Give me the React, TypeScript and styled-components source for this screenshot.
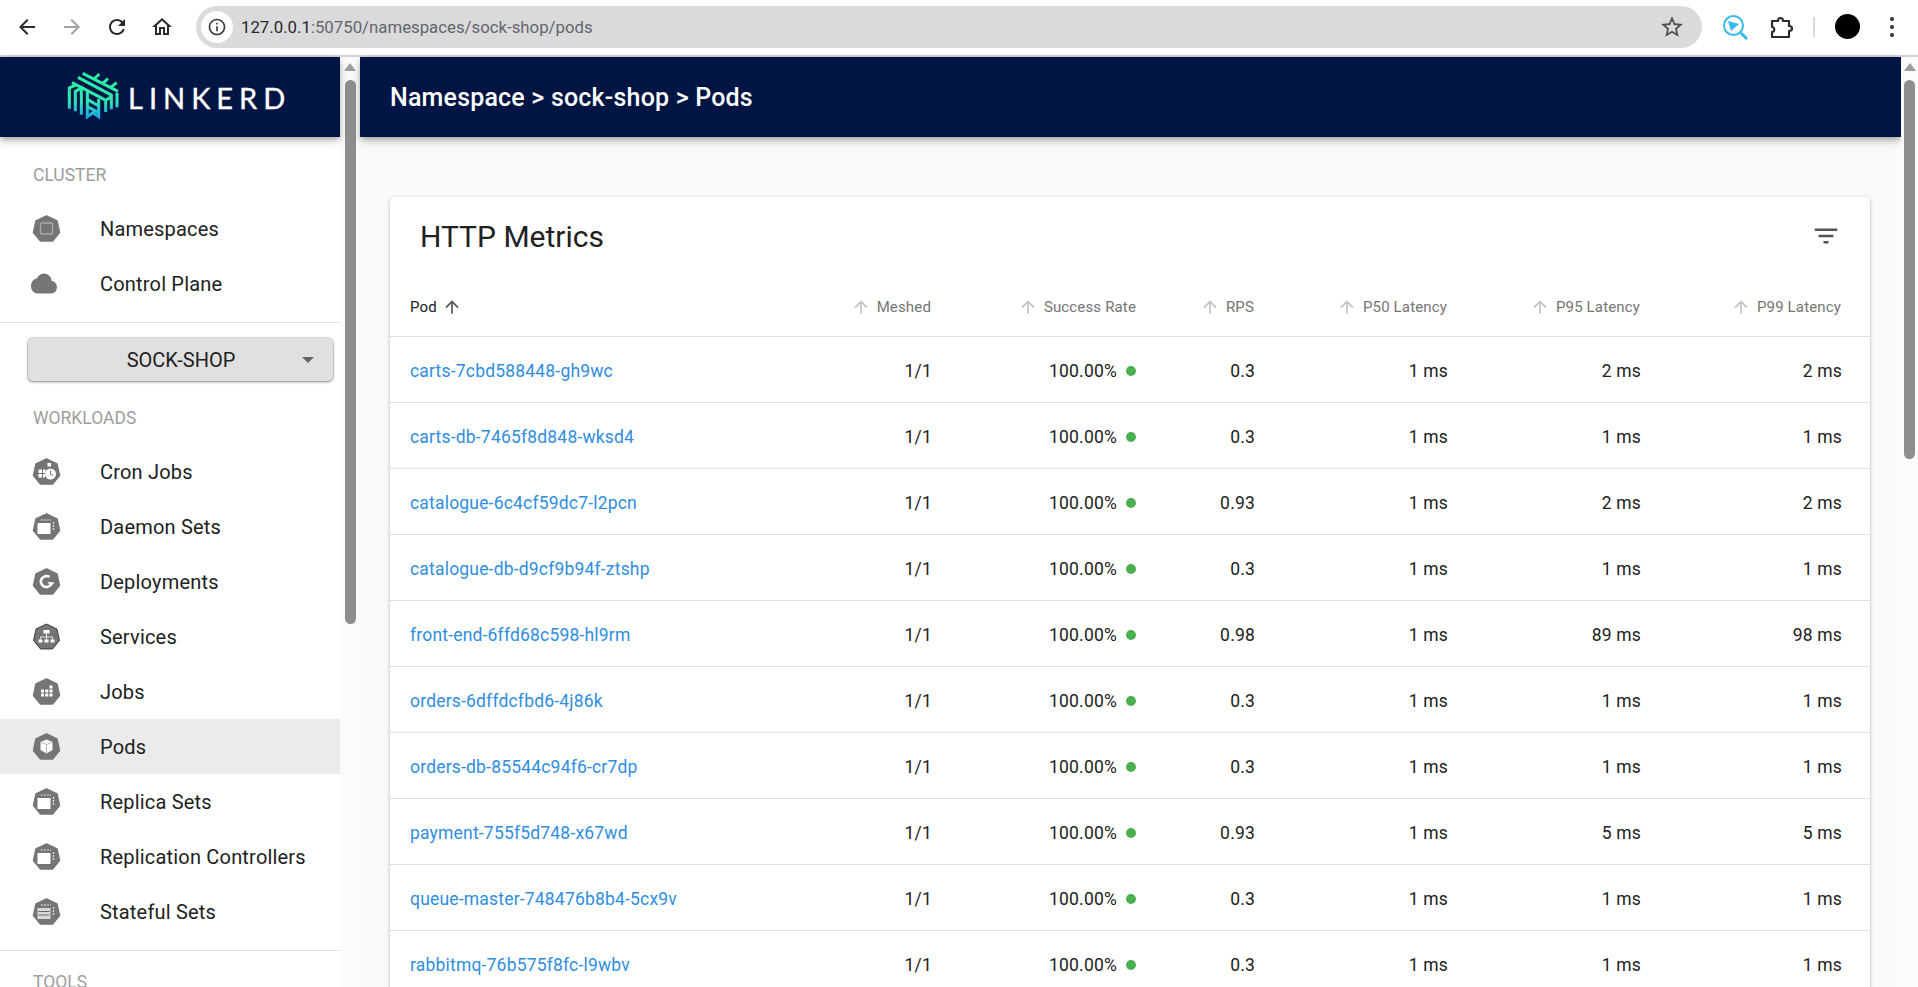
import React from "react";
import styled, { createGlobalStyle } from "styled-components";

// Types for the table rows
type PodRow = {
  pod: string;
  rps: string;
  p50: string;
  p95: string;
  p99: string;
};

type NavEntry = {
  label: string;
  icon: React.ReactNode;
  active?: boolean;
};

const pods: PodRow[] = [
  { pod: "carts-7cbd588448-gh9wc", rps: "0.3", p50: "1 ms", p95: "2 ms", p99: "2 ms" },
  { pod: "carts-db-7465f8d848-wksd4", rps: "0.3", p50: "1 ms", p95: "1 ms", p99: "1 ms" },
  { pod: "catalogue-6c4cf59dc7-l2pcn", rps: "0.93", p50: "1 ms", p95: "2 ms", p99: "2 ms" },
  { pod: "catalogue-db-d9cf9b94f-ztshp", rps: "0.3", p50: "1 ms", p95: "1 ms", p99: "1 ms" },
  { pod: "front-end-6ffd68c598-hl9rm", rps: "0.98", p50: "1 ms", p95: "89 ms", p99: "98 ms" },
  { pod: "orders-6dffdcfbd6-4j86k", rps: "0.3", p50: "1 ms", p95: "1 ms", p99: "1 ms" },
  { pod: "orders-db-85544c94f6-cr7dp", rps: "0.3", p50: "1 ms", p95: "1 ms", p99: "1 ms" },
  { pod: "payment-755f5d748-x67wd", rps: "0.93", p50: "1 ms", p95: "5 ms", p99: "5 ms" },
  { pod: "queue-master-748476b8b4-5cx9v", rps: "0.3", p50: "1 ms", p95: "1 ms", p99: "1 ms" },
  { pod: "rabbitmq-76b575f8fc-l9wbv", rps: "0.3", p50: "1 ms", p95: "1 ms", p99: "1 ms" },
];

const GlobalStyle = createGlobalStyle`
  html, body {
    margin: 0;
    height: 100%;
    overflow: hidden;
    background: #fafafa;
    font-family: Roboto, "Liberation Sans", sans-serif;
  }
  * { box-sizing: border-box; }
`;

const Page = styled.div`
  width: 1918px;
  height: 987px;
  display: flex;
  flex-direction: column;
  overflow: hidden;
`;

// BROWSER CHROME
const Chrome = styled.header`
  height: 57px;
  flex: none;
  display: flex;
  align-items: center;
  padding: 0 0 2px 15px;
  background: #fff;
  border-bottom: 2px solid #d2d2d2;
`;
const ChromeButton = styled.span<{ $muted?: boolean; $gap?: number }>`
  width: 24px;
  height: 24px;
  flex: none;
  margin-right: ${({ $gap }) => $gap ?? 21}px;
  color: ${({ $muted }) => ($muted ? "#a3a3a3" : "#2b2b2b")};
  svg { display: block; width: 100%; height: 100%; fill: currentColor; }
`;
const AddressBar = styled.div`
  width: 1506px;
  height: 42px;
  margin-left: 22px;
  flex: none;
  display: flex;
  align-items: center;
  padding: 0 17px 0 5px;
  border-radius: 21px;
  background: #dadadc;
`;
const InfoBadge = styled.span`
  width: 32px;
  height: 32px;
  flex: none;
  display: flex;
  align-items: center;
  justify-content: center;
  border-radius: 50%;
  background: #fff;
  color: #3c3c3c;
  svg { width: 20px; height: 20px; fill: currentColor; }
`;
const Url = styled.div`
  flex: 1;
  margin-left: 8px;
  font-size: 16.8px;
  color: #63666a;
  strong { font-weight: 400; color: #26282b; }
`;
const StarIcon = styled.span`
  width: 26px;
  height: 26px;
  color: #4c4c4c;
  svg { display: block; width: 100%; height: 100%; fill: currentColor; }
`;
const ToolIcon = styled.span<{ $left: number }>`
  width: 28px;
  height: 28px;
  flex: none;
  margin-left: ${({ $left }) => $left}px;
  svg { display: block; width: 100%; height: 100%; }
`;
const ChromeDivider = styled.span`
  width: 2px;
  height: 20px;
  flex: none;
  margin-left: 18px;
  background: #dcdad6;
`;
const Avatar = styled.span`
  width: 25px;
  height: 25px;
  flex: none;
  margin-left: 20px;
  border-radius: 50%;
  background: #000;
`;
const MenuDots = styled.span`
  width: 4px;
  flex: none;
  margin-left: 30px;
  display: flex;
  flex-direction: column;
  gap: 4px;
  i { display: block; width: 4px; height: 4px; border-radius: 50%; background: #333; }
`;

// APP SHELL
const Body = styled.div`
  flex: 1;
  min-height: 0;
  display: flex;
`;
const Sidebar = styled.aside`
  width: 340px;
  flex: none;
  display: flex;
  flex-direction: column;
  background: #fff;
`;
const BrandBar = styled.div`
  height: 80px;
  flex: none;
  display: flex;
  align-items: center;
  padding-left: 67px;
  background: #001544;
  box-shadow: 0 3px 6px -1px rgba(0, 0, 0, 0.3), 0 5px 10px rgba(0, 0, 0, 0.12);
  position: relative;
`;
const LogoMark = styled.svg`
  width: 52px;
  height: 52px;
  flex: none;
`;
const LogoText = styled.span`
  margin-left: 9px;
  font-family: Lato, "Open Sans", sans-serif;
  font-size: 29px;
  font-weight: 400;
  letter-spacing: 6px;
  color: #fff;
  -webkit-text-stroke: 0.35px #fff;
`;
const SectionLabel = styled.div<{ $top: number; $bottom: number }>`
  margin: ${({ $top }) => $top}px 0 ${({ $bottom }) => $bottom}px 33px;
  height: 20px;
  font-size: 17.5px;
  line-height: 20px;
  color: #9e9e9e;
`;
const NavItem = styled.div<{ $active?: boolean }>`
  height: 55px;
  flex: none;
  display: flex;
  align-items: center;
  padding-left: 33px;
  font-size: 20px;
  letter-spacing: 0.19px;
  color: #212121;
  background: ${({ $active }) => ($active ? "#ebebeb" : "transparent")};
`;
const NavIconSlot = styled.span`
  width: 27px;
  height: 27px;
  flex: none;
  margin-right: 40px;
  svg { display: block; width: 100%; height: 100%; overflow: visible; }
`;
const Rule = styled.div<{ $top: number }>`
  height: 1px;
  flex: none;
  margin-top: ${({ $top }) => $top}px;
  background: #e0e0e0;
`;
const NamespaceSelect = styled.div`
  height: 43px;
  flex: none;
  margin: 15px 7px 0 28px;
  padding: 0 19px 0 0;
  display: flex;
  align-items: center;
  border-radius: 5px;
  background: #e0e0e0;
  font-size: 20px;
  color: #212121;
  box-shadow: 0 0 0 1px rgba(0, 0, 0, 0.1), 0 1px 3px rgba(0, 0, 0, 0.4);
  span { flex: 1; text-align: center; padding-left: 32px; }
  i {
    width: 0;
    height: 0;
    border-left: 6.5px solid transparent;
    border-right: 6.5px solid transparent;
    border-top: 6.5px solid #666;
  }
`;

// SCROLLBARS
const ScrollTrack = styled.div<{ $width: number; $thumbEnd: number; $bg: string }>`
  width: ${({ $width }) => $width}px;
  flex: none;
  background: ${({ $bg }) => $bg};
  display: flex;
  flex-direction: column;
  align-items: center;
  padding-top: 6px;
  &::before {
    content: "";
    width: 0;
    height: 0;
    border-left: 6.5px solid transparent;
    border-right: 6.5px solid transparent;
    border-bottom: 8px solid #9c9c9c;
  }
  &::after {
    content: "";
    display: block;
    width: 11px;
    height: ${({ $thumbEnd }) => $thumbEnd}px;
    margin-top: 9px;
    border-radius: 6px;
    background: #8e8e8e;
  }
`;

// MAIN CONTENT
const Main = styled.main`
  flex: 1;
  min-width: 0;
  display: flex;
  flex-direction: column;
  background: #fafafa;
`;
const TopBar = styled.div`
  height: 80px;
  flex: none;
  display: flex;
  align-items: center;
  padding-left: 30px;
  background: #001544;
  color: #fff;
  font-size: 25px;
  font-weight: 500;
  letter-spacing: 0.19px;
  box-shadow: 0 3px 6px -1px rgba(0, 0, 0, 0.3), 0 5px 10px rgba(0, 0, 0, 0.12);
`;
const Card = styled.section`
  margin: 60px 31px 0 30px;
  border-radius: 5px;
  background: #fff;
  box-shadow: 0 1px 4px rgba(0, 0, 0, 0.22), 0 1px 2px rgba(0, 0, 0, 0.12);
`;
const CardHead = styled.div`
  height: 80px;
  display: flex;
  align-items: center;
  justify-content: space-between;
  padding: 0 29px 2px 30px;
  h2 {
    margin: 0;
    font-size: 30px;
    font-weight: 400;
    color: #212121;
  }
  svg { width: 30px; height: 30px; fill: #555; display: block; }
`;
const Row = styled.div<{ $head?: boolean }>`
  height: ${({ $head }) => ($head ? 60 : 66)}px;
  display: grid;
  grid-template-columns: 400px 121px 205px 118px 193px 193px 201px;
  align-items: center;
  padding: ${({ $head }) => ($head ? 0 : 2)}px 0 0 20px;
  border-bottom: 1px solid #e0e0e0;
  font-size: ${({ $head }) => ($head ? 15 : 17.5)}px;
  letter-spacing: ${({ $head }) => ($head ? 0.15 : 0.19)}px;
  color: #212121;
`;
const HeadLabel = styled.div<{ $active?: boolean }>`
  display: flex;
  align-items: center;
  justify-content: ${({ $active }) => ($active ? "flex-start" : "flex-end")};
  gap: ${({ $active }) => ($active ? 5 : 6)}px;
  color: ${({ $active }) => ($active ? "#212121" : "#757575")};
  svg {
    width: 20px;
    height: 20px;
    flex: none;
    fill: ${({ $active }) => ($active ? "#555" : "#c4c4c4")};
  }
`;
const Num = styled.div`
  text-align: right;
  margin-right: -1px;
`;
const PodLink = styled.a`
  color: #2f8ee0;
  text-decoration: none;
`;
const RateCell = styled.div`
  display: flex;
  align-items: center;
  justify-content: flex-end;
  gap: 9px;
  i {
    width: 10px;
    height: 10px;
    border-radius: 50%;
    background: #4caf50;
  }
`;

// ICONS
const HEPTAGON = "13.5,1 24,6 26.5,17.5 19.5,26 7.5,26 .5,17.5 3,6";

const Hept = ({ children, outline }: { children?: React.ReactNode; outline?: boolean }) => (
  <svg viewBox="0 0 27 27">
    <polygon
      points={HEPTAGON}
      fill="#757575"
      stroke={outline ? "#222" : "#757575"}
      strokeWidth={outline ? 0.8 : 1.5}
      strokeLinejoin="round"
    />
    {children}
  </svg>
);

const StackedBox = ({ detail }: { detail?: boolean }) => (
  <>
    <path d="M8 7h10M20.500 9v8" stroke="#e6e6e6" strokeWidth="1.200" strokeDasharray="2 1" fill="none" />
    <rect x="4.500" y="10" width="13" height="11" fill={detail ? "#d8d8d8" : "#fff"} />
    {detail && <path d="M5.500 13.500h11M5.500 17h11" stroke="#666" strokeWidth="1.200" />}
  </>
);

const navCluster: NavEntry[] = [
  {
    label: "Namespaces",
    icon: (
      <Hept>
        <rect x="7.500" y="8" width="12" height="11" rx="1" fill="none" stroke="#a8a8a8" strokeWidth="1.400" />
      </Hept>
    ),
  },
  {
    label: "Control Plane",
    icon: (
      <svg viewBox="0 0 27 27">
        <path
          transform="translate(-2 -1.500) scale(1.080 1.250)"
          d="M19.350 10.040C18.670 6.590 15.640 4 12 4 9.110 4 6.600 5.640 5.350 8.040 2.340 8.360 0 10.910 0 14c0 3.310 2.690 6 6 6h13c2.760 0 5-2.240 5-5 0-2.640-2.050-4.780-4.650-4.960z"
          fill="#757575"
        />
      </svg>
    ),
  },
];

const navWorkloads: NavEntry[] = [
  {
    label: "Cron Jobs",
    icon: (
      <Hept>
        <path d="M14.500 5h3.500v3.500h-3.500zM5.500 11.500h3.500v3.500h-3.500zM10 11.500h2.500v3.500h-2.500zM5.500 16h3.500v3.500h-3.500zM10 16h2v3.500h-2z" fill="#fff" />
        <circle cx="17.500" cy="16" r="5.500" fill="#fff" />
        <path d="M17.500 12.500v3.800l2.500 1.200" stroke="#757575" strokeWidth="1" fill="none" />
      </Hept>
    ),
  },
  { label: "Daemon Sets", icon: <Hept><StackedBox /></Hept> },
  {
    label: "Deployments",
    icon: (
      <Hept>
        <path d="M18.500 15.500A5.500 5.500 0 1 1 16.500 9" stroke="#fff" strokeWidth="2.600" fill="none" />
        <path d="M14.500 14l7 .5-3.500 4z" fill="#fff" />
      </Hept>
    ),
  },
  {
    label: "Services",
    icon: (
      <Hept outline>
        <path d="M10.500 7h6v3.500h-6zM5.500 16.500h4v3h-4zM11.500 16.500h4v3h-4zM17.500 16.500h4v3h-4z" fill="#fff" />
        <path d="M13.500 10.500v6M7.500 16.500v-2.500h12v2.500" stroke="#fff" strokeWidth=".8" fill="none" />
      </Hept>
    ),
  },
  {
    label: "Jobs",
    icon: (
      <Hept>
        <path d="M16.500 7.500h3v3h-3zM8 11.500h3v3H8zM12.250 11.500h3v3h-3zM16.500 11.500h3v3h-3zM8 15.500h3v3H8zM12.250 15.500h3v3h-3zM16.500 15.500h3v3h-3z" fill="#fff" />
      </Hept>
    ),
  },
  {
    label: "Pods",
    active: true,
    icon: (
      <Hept>
        <path d="M13.500 6.500l6 2.500v8l-6 3.500-6-3.500V9z" fill="#fff" />
        <path d="M7.500 9l6 2.500 6-2.500M13.500 11.500v9" stroke="#b5b5b5" strokeWidth="1" fill="none" />
      </Hept>
    ),
  },
  { label: "Replica Sets", icon: <Hept><StackedBox /></Hept> },
  { label: "Replication Controllers", icon: <Hept><StackedBox /></Hept> },
  { label: "Stateful Sets", icon: <Hept><StackedBox detail /></Hept> },
];

const ArrowUp = () => (
  <svg viewBox="0 0 24 24">
    <path d="M4 12l1.410 1.410L11 7.830V20h2V7.830l5.580 5.590L20 12l-8-8-8 8z" />
  </svg>
);

const LogoSvg = () => (
  <LogoMark viewBox="15 15 156 156">
    <defs>
      <linearGradient id="logoGrad" gradientUnits="userSpaceOnUse" x1="0" y1="25" x2="0" y2="160">
        <stop offset="0" stopColor="#2bf0a0" />
        <stop offset="0.6" stopColor="#2ee6b4" />
        <stop offset="1" stopColor="#1aa0f0" />
      </linearGradient>
    </defs>
    <g fill="none" stroke="url(#logoGrad)" strokeWidth="9">
      <path d="M62 22L168 76M48 34L150 88M30 50L128 101" />
      <path d="M96 39L112 24M122 52L138 38M146 64L164 50" />
      <path d="M22 128V66L44 56M40 136V76L58 66V146" />
      <path d="M76 76V152L93 140L110 152V98" />
      <path d="M76 100L110 120M76 122L110 140" />
      <path d="M131 138V103L148 92V130M165 124V80" />
    </g>
  </LogoMark>
);

const renderNav = (items: NavEntry[]) =>
  items.map(item => (
    <NavItem $active={item.active} key={item.label}>
      <NavIconSlot>{item.icon}</NavIconSlot>
      {item.label}
    </NavItem>
  ));

const headColumns = ["Meshed", "Success Rate", "RPS", "P50 Latency", "P95 Latency", "P99 Latency"];

const App = () => {
  return (
    <Page>
      <GlobalStyle />
      <Chrome>
        <ChromeButton>
          <svg viewBox="0 0 24 24"><path d="M20 11H7.830l5.590-5.590L12 4l-8 8 8 8 1.410-1.410L7.830 13H20v-2z" /></svg>
        </ChromeButton>
        <ChromeButton $muted>
          <svg viewBox="0 0 24 24"><path d="M4 11h12.170l-5.590-5.590L12 4l8 8-8 8-1.410-1.410L16.170 13H4v-2z" /></svg>
        </ChromeButton>
        <ChromeButton>
          <svg viewBox="0 0 24 24"><path d="M17.650 6.350C16.200 4.900 14.210 4 12 4c-4.420 0-7.990 3.580-7.990 8s3.570 8 7.990 8c3.730 0 6.840-2.550 7.730-6h-2.080c-.82 2.330-3.040 4-5.650 4-3.310 0-6-2.690-6-6s2.690-6 6-6c1.660 0 3.140.69 4.220 1.780L13 11h7V4l-2.350 2.350z" /></svg>
        </ChromeButton>
        <ChromeButton $gap={0}>
          <svg viewBox="0 0 24 24"><path d="M12 5.690l5 4.500V18h-2v-6H9v6H7v-7.810l5-4.500M12 3L2 12h3v8h6v-6h2v6h6v-8h3L12 3z" /></svg>
        </ChromeButton>
        <AddressBar>
          <InfoBadge>
            <svg viewBox="0 0 24 24"><path d="M11 7h2v2h-2zm0 4h2v6h-2zm1-9C6.480 2 2 6.480 2 12s4.480 10 10 10 10-4.480 10-10S17.520 2 12 2zm0 18c-4.410 0-8-3.590-8-8s3.590-8 8-8 8 3.590 8 8-3.590 8-8 8z" /></svg>
          </InfoBadge>
          <Url><strong>127.0.0.1</strong>:50750/namespaces/sock-shop/pods</Url>
          <StarIcon>
            <svg viewBox="0 0 24 24"><path d="M22 9.240l-7.190-.62L12 2 9.190 8.630 2 9.240l5.460 4.730L5.820 21 12 17.270 18.180 21l-1.630-7.030L22 9.240zM12 15.400l-3.760 2.270 1-4.280-3.320-2.880 4.380-.38L12 6.100l1.710 4.040 4.380.38-3.320 2.880 1 4.280L12 15.400z" /></svg>
          </StarIcon>
        </AddressBar>
        <ToolIcon $left={19}>
          <svg viewBox="0 0 28 28">
            <circle cx="12.500" cy="12.500" r="9.500" fill="none" stroke="#35b8f0" strokeWidth="2" />
            <path d="M7 8l11 3-8 7z" fill="#35b8f0" />
            <path d="M20 20l6 6" stroke="#35b8f0" strokeWidth="3" />
          </svg>
        </ToolIcon>
        <ToolIcon $left={18}>
          <svg viewBox="0 0 28 28">
            <path d="M5 8h6c0-4 5-4 5 0h6v5c4 0 4 5 0 5v6H5v-5c3 0 3-5 0-5z" fill="none" stroke="#2b2b2b" strokeWidth="2.200" strokeLinejoin="round" />
          </svg>
        </ToolIcon>
        <ChromeDivider />
        <Avatar />
        <MenuDots><i /><i /><i /></MenuDots>
      </Chrome>
      <Body>
        <Sidebar>
          <BrandBar>
            <LogoSvg />
            <LogoText>LINKERD</LogoText>
          </BrandBar>
          <SectionLabel $top={28} $bottom={16}>CLUSTER</SectionLabel>
          {renderNav(navCluster)}
          <Rule $top={11} />
          <NamespaceSelect>
            <span>SOCK-SHOP</span>
            <i />
          </NamespaceSelect>
          <SectionLabel $top={27} $bottom={16}>WORKLOADS</SectionLabel>
          {renderNav(navWorkloads)}
          <Rule $top={11} />
          <SectionLabel $top={21} $bottom={0}>TOOLS</SectionLabel>
        </Sidebar>
        <ScrollTrack $width={20} $thumbEnd={544} $bg="#fbfbfb" />
        <Main>
          <TopBar>Namespace &gt; sock-shop &gt; Pods</TopBar>
          <Card>
            <CardHead>
              <h2>HTTP Metrics</h2>
              <svg viewBox="0 0 24 24"><path d="M10 18h4v-2h-4v2zM3 6v2h18V6H3zm3 7h12v-2H6v2z" /></svg>
            </CardHead>
            <Row $head>
              <HeadLabel $active>Pod <ArrowUp /></HeadLabel>
              {headColumns.map(title => (
                <HeadLabel key={title}><ArrowUp />{title}</HeadLabel>
              ))}
            </Row>
            {pods.map(row => (
              <Row key={row.pod}>
                <div><PodLink href="#">{row.pod}</PodLink></div>
                <Num>1/1</Num>
                <RateCell>100.00% <i /></RateCell>
                <Num>{row.rps}</Num>
                <Num>{row.p50}</Num>
                <Num>{row.p95}</Num>
                <Num>{row.p99}</Num>
              </Row>
            ))}
          </Card>
        </Main>
        <ScrollTrack $width={17} $thumbEnd={379} $bg="#fbfbfb" />
      </Body>
    </Page>
  );
};

export default App;
